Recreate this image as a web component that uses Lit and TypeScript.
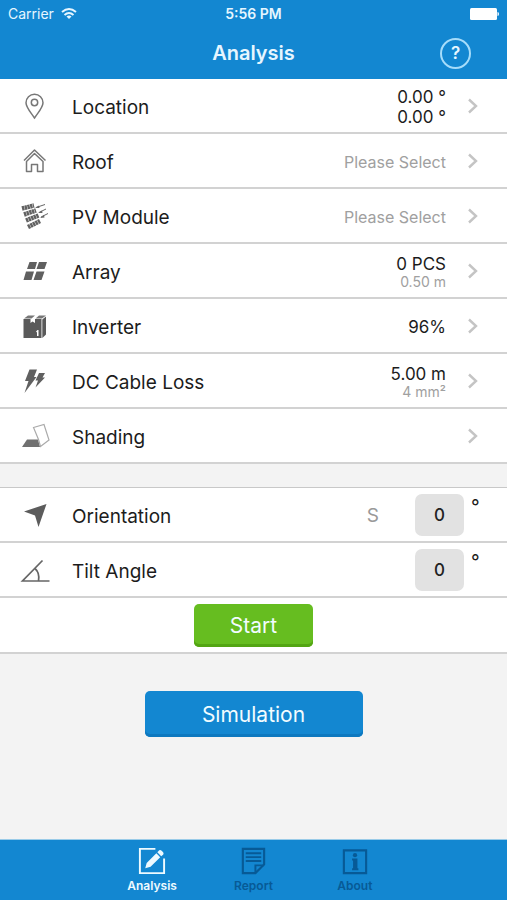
import { LitElement, html, svg, css, nothing } from "lit";
import { customElement } from "lit/decorators.js";

const icons = {
  location: svg`<g fill="none" stroke="#777" stroke-width="1.500"><path d="M14.500 27C10.500 21 6 16.500 6 11.800A8.500 8.500 0 0 1 23 11.800C23 16.500 18.500 21 14.500 27Z"/><circle cx="14.500" cy="11.500" r="3.200"/></g>`,
  roof: svg`<g fill="none" stroke="#777" stroke-width="1.500" stroke-linejoin="round"><path d="M4 14.500 14.500 4 25.500 14.500"/><path d="M6.500 15.500V25.500H11.500V18.500H17.500V25.500H23V15.500L14.500 7.500Z"/></g>`,
  module: svg`<g fill="none" stroke="#626262" stroke-width="4.500" stroke-dasharray="2.400 .4"><path d="M2 7.500 14 4.500"/><path d="M4 13.500 16 9.500"/><path d="M6 19.500 18.500 14.500"/><path d="M8 26 20 20"/></g><g stroke="#666" stroke-width="1" fill="#666"><path d="M16 6.500 25 3.500M19 11.500 26 8M21 16 28 12.500"/><path stroke="none" d="M15 7 19 4.500 19.500 7ZM18 12 22 9.500 22.500 12ZM20 17 24 14 24.500 16.500Z"/></g>`,
  array: svg`<path fill="#606060" d="M9.500 6H17L15 13H7ZM19 6H27L24.500 13H16.500ZM6 15.500H14L11.500 24H3.500ZM16.500 15.500H24.500L21.500 24H13.500Z"/>`,
  inverter: svg`<path fill="#5a5a5a" d="M3.500 8H10.500V12L12.500 10.500 15 12V8H21.500V27H3.500Z"/><path fill="#777" d="M4 7.500 8 4.500H15L11.500 7.500ZM15.500 7.500 19 4.500H26L22 7.500Z"/><path fill="#5a5a5a" d="M22.300 8.500 26 5.500V23.500L22.300 27Z"/><path fill="#fff" d="M16 20.500 17.500 19H18.500V25H17V21.500Z"/>`,
  cable: svg`<path fill="#606060" d="M9.500 3.500H17L14 11H16.500L4.500 27 8.500 15H5ZM19 7H25L22.500 11.500H25L15.500 21.500 18 14.500H15.500Z"/>`,
  shading: svg`<path fill="#707070" d="M7 18.500H18L20 26H2Z"/><path fill="none" stroke="#aaa" stroke-width="1.200" d="M13.500 6.500 24 3.500 29 19 20.500 25.500 18.500 18.500Z"/>`,
  orientation: svg`<path fill="#5c5c5c" d="M26.500 4 4 11.500 15 15.500 18.500 27Z"/>`,
  tilt: svg`<g fill="none" stroke="#666" stroke-width="1.700"><path d="M22.500 5.500 2.500 26H29.500"/><path d="M15 13.500Q20 18 18.500 26"/></g>`,
  analysis: svg`<path fill="none" stroke="currentColor" stroke-width="2" d="M19 3H3V28H28V13"/><path fill="currentColor" d="M8.500 23 10 17.500 20 7.500 24 11.500 14 21.500ZM21 6.500 23 4.500Q24 3.500 25.500 5L27 6.500Q28 8 27 9L25 10.500Z"/>`,
  report: svg`<path fill="none" stroke="currentColor" stroke-width="2.200" d="M5 3H27V19L18 28H5Z"/><path fill="none" stroke="currentColor" stroke-width="2" d="M18 28V20H27M8 7.500H24M8 11.500H24M8 15.500H24"/>`,
  about: svg`<path fill="none" stroke="currentColor" stroke-width="2.200" d="M4 4.500H27V28H4Z"/><circle cx="15.500" cy="9.500" r="2.200" fill="currentColor"/><path fill="currentColor" d="M12.500 13H18V23H19V25H12.500V23H13.500V15H12.500Z"/>`,
};

type IconName = keyof typeof icons;

interface Row {
  icon: IconName;
  label: string;
  value?: unknown;
  note?: unknown;
}

const rows: Row[] = [
  { icon: "location", label: "Location", value: html`0.00 °<br />0.00 °` },
  { icon: "roof", label: "Roof", note: "Please Select" },
  { icon: "module", label: "PV Module", note: "Please Select" },
  { icon: "array", label: "Array", value: "0 PCS", note: "0.50 m" },
  { icon: "inverter", label: "Inverter", value: "96%" },
  { icon: "cable", label: "DC Cable Loss", value: "5.00 m", note: "4 mm²" },
  { icon: "shading", label: "Shading" },
];

const angles: { icon: IconName; id: string; label: string; heading?: string }[] = [
  { icon: "orientation", id: "orientation", label: "Orientation", heading: "S" },
  { icon: "tilt", id: "tilt", label: "Tilt Angle" },
];

const tabs: { icon: IconName; label: string }[] = [
  { icon: "analysis", label: "Analysis" },
  { icon: "report", label: "Report" },
  { icon: "about", label: "About" },
];

@customElement("app-root")
export class AppRoot extends LitElement {
  static styles = css`
    :host {
      display: flex;
      flex-direction: column;
      min-height: 100vh;
      background: #f3f3f3;
      color: #1c1c1c;
      font-family: Inter, "Liberation Sans", sans-serif;
      font-size: 19px;
    }
    * {
      box-sizing: border-box;
    }
    svg {
      display: block;
      flex: none;
    }
    .top {
      background: #1387d1;
      color: #e6f6ff;
    }
    .status,
    .nav {
      display: grid;
      grid-template-columns: 1fr auto 1fr;
      align-items: center;
    }
    .status {
      height: 27px;
      padding: 0 8px;
      font-size: 14px;
    }
    .carrier {
      display: flex;
      align-items: center;
      gap: 7px;
    }
    .time {
      font-weight: 600;
    }
    .end {
      justify-self: end;
    }
    .nav {
      height: 52px;
      padding: 0 36px;
    }
    .title {
      grid-column: 2;
      margin: 0;
      font-size: 20px;
      font-weight: 600;
    }
    .help {
      width: 31px;
      height: 31px;
      padding: 0;
      border: 2px solid #a6dcfa;
      border-radius: 50%;
      background: none;
      color: inherit;
      font: 600 17px Inter, sans-serif;
    }
    .group {
      margin: 0;
      padding: 0;
      list-style: none;
      background: #fff;
    }
    .second {
      margin-top: 23px;
      border-top: 1px solid #c8c8c8;
    }
    .row {
      display: flex;
      align-items: center;
      height: 55px;
      padding: 1px 28px 0 20px;
      border-bottom: 2px solid #d2d2d2;
      color: inherit;
      text-decoration: none;
    }
    .label {
      flex: 1;
      margin: 2px 0 0 22px;
    }
    .figures {
      margin: 2px 21px 0 0;
      text-align: right;
      font-size: 17px;
      line-height: 20px;
    }
    .note {
      display: block;
      color: #a0a0a0;
      font-size: 14px;
      line-height: 16px;
    }
    .only {
      font-size: 16px;
    }
    .heading {
      margin-right: 36px;
      color: #999;
    }
    .angle {
      width: 49px;
      height: 42px;
      padding: 0;
      border: 0;
      border-radius: 7px;
      background: #e2e2e2;
      color: #222;
      font: 500 17px Inter, sans-serif;
      text-align: center;
    }
    .degree {
      align-self: flex-start;
      width: 15px;
      margin: 6px -7px 0 7px;
      line-height: 24px;
    }
    .action {
      display: flex;
      justify-content: center;
      padding: 6px 0 5px;
      border-bottom: 2px solid #d2d2d2;
    }
    .button {
      padding: 0;
      border: 0;
      border-radius: 5px;
      color: #f2fcff;
      font: 400 21px Inter, sans-serif;
    }
    .start {
      width: 119px;
      height: 43px;
      background: #66bd20;
      box-shadow: inset 0 -3px #53a513;
    }
    .simulation {
      align-self: center;
      width: 43%;
      height: 46px;
      margin-top: 37px;
      background: #1387d1;
      box-shadow: inset 0 -3px #0d78bf;
    }
    .tabs {
      display: flex;
      justify-content: center;
      height: 61px;
      margin-top: auto;
      border-top: 1px solid #9acbe8;
      background: #1387d1;
    }
    .tab {
      display: flex;
      flex-direction: column;
      align-items: center;
      gap: 2px;
      width: 20%;
      padding-top: 6px;
      color: #075a96;
      font-size: 12px;
      font-weight: 600;
      text-decoration: none;
    }
    .active {
      color: #eefaff;
    }
  `;

  private icon(name: IconName) {
    return html`<svg width="30" height="30" viewBox="0 0 30 30" aria-hidden="true">${icons[name]}</svg>`;
  }

  render() {
    return html`
      <header class="top">
        <div class="status">
          <span class="carrier">
            Carrier
            <svg width="16" height="13" viewBox="0 0 16 13" fill="none" stroke="currentColor" stroke-width="2">
              <path d="M1 5Q8-1 15 5M3.500 8Q8 4 12.500 8" />
              <path d="M5.500 9.500Q8 7.500 10.500 9.500L8 12Z" fill="currentColor" stroke="none" />
            </svg>
          </span>
          <span class="time">5:56 PM</span>
          <svg class="end" width="30" height="12" viewBox="0 0 30 12" fill="#fff">
            <rect x="1" width="27" height="12" rx="1.500" />
            <path d="M28.500 4Q30 4 30 6T28.500 8Z" />
          </svg>
        </div>
        <div class="nav">
          <h1 class="title">Analysis</h1>
          <button class="help end" aria-label="Help">?</button>
        </div>
      </header>
      <main>
        <ul class="group">
          ${rows.map(
            (r) => html`<li>
              <a class="row" href="#${r.icon}">
                ${this.icon(r.icon)}
                <span class="label">${r.label}</span>
                <span class="figures">
                  ${r.value ?? nothing}
                  ${r.note ? html`<span class="note ${r.value ? "" : "only"}">${r.note}</span>` : nothing}
                </span>
                <svg width="12" height="16" viewBox="0 0 12 16" fill="none" stroke="#c4c4c4" stroke-width="2.400">
                  <path d="M2 1.500 9 8 2 14.500" />
                </svg>
              </a>
            </li>`
          )}
        </ul>
        <div class="group second">
          ${angles.map(
            (a) => html`<div class="row">
              ${this.icon(a.icon)}
              <label class="label" for=${a.id}>${a.label}</label>
              ${a.heading ? html`<span class="heading">${a.heading}</span>` : nothing}
              <input class="angle" id=${a.id} inputmode="numeric" value="0" />
              <span class="degree">°</span>
            </div>`
          )}
          <div class="action"><button class="button start">Start</button></div>
        </div>
      </main>
      <button class="button simulation">Simulation</button>
      <nav class="tabs">
        ${tabs.map(
          (t, i) => html`<a class="tab ${i === 0 ? "active" : ""}" href="#${t.icon}">
            <svg width="30" height="30" viewBox="0 0 31 31" aria-hidden="true">${icons[t.icon]}</svg>
            ${t.label}
          </a>`
        )}
      </nav>
    `;
  }
}
